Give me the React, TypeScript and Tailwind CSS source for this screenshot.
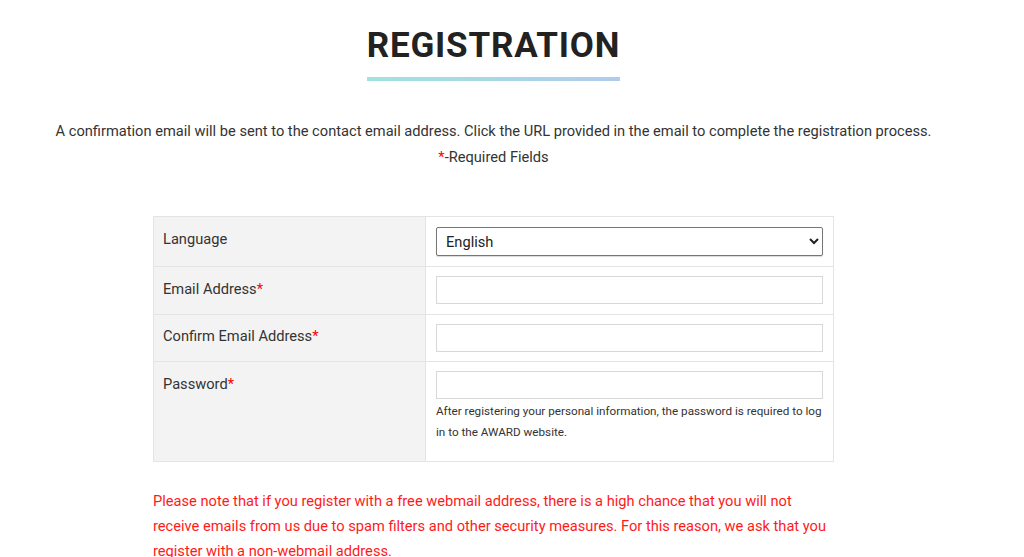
import React from "react";

export default function App() {
  const star = <span className="text-[#ff0000]">*</span>;
  return (
    <div className="w-[1024px] h-[557px] overflow-hidden bg-white text-[#333] font-['Roboto',sans-serif]">
      <div className="w-[987px] flex flex-col items-center">
        <h1 className="mt-[26px] text-[35px] leading-[40px] font-bold tracking-[0.8px] text-[#222]">REGISTRATION</h1>
        <div className="mt-[11px] w-[253px] h-[4px] bg-gradient-to-r from-[#9fe3de] to-[#b1cbee]" />
        <p className="mt-[37px] text-[14.65px] leading-[26px] text-center">
          A confirmation email will be sent to the contact email address. Click the URL provided in the email to complete the registration process.
        </p>
        <p className="text-[14.65px] leading-[26px] text-center">{star}-Required Fields</p>
        <table className="mt-[46px] w-[681px] border-collapse text-[14.65px] leading-[20px]">
          <tbody>
            <tr className="h-[50px]">
              <th className="w-[272px] bg-[#f3f3f3] border border-[#e4e4e4] px-[9px] pt-[12px] align-top text-left font-normal">Language</th>
              <td className="border border-[#e4e4e4] px-[10px] pt-[10px] align-top">
                <select className="w-full h-[29px] border border-[#767676] rounded-[2px] px-[5px] text-[14.65px] text-[#222] bg-white shadow-[0_1px_1px_rgba(0,0,0,0.15)]" defaultValue="English">
                  <option>English</option>
                </select>
              </td>
            </tr>
            <tr className="h-[48px]">
              <th className="bg-[#f3f3f3] border border-[#e4e4e4] px-[9px] pt-[12px] align-top text-left font-normal">Email Address{star}</th>
              <td className="border border-[#e4e4e4] px-[10px] pt-[9px] align-top">
                <input className="block w-full h-[28px] border border-[#d8d8d8] bg-white" />
              </td>
            </tr>
            <tr className="h-[47px]">
              <th className="bg-[#f3f3f3] border border-[#e4e4e4] px-[9px] pt-[11px] align-top text-left font-normal">Confirm Email Address{star}</th>
              <td className="border border-[#e4e4e4] px-[10px] pt-[9px] align-top">
                <input className="block w-full h-[28px] border border-[#d8d8d8] bg-white" />
              </td>
            </tr>
            <tr className="h-[100px]">
              <th className="bg-[#f3f3f3] border border-[#e4e4e4] px-[9px] pt-[12px] align-top text-left font-normal">Password{star}</th>
              <td className="border border-[#e4e4e4] px-[10px] pt-[9px] align-top">
                <input type="password" className="block w-full h-[28px] border border-[#d8d8d8] bg-white" />
                <p className="mt-[2px] text-[11.7px] leading-[21px] text-[#333]">
                  After registering your personal information, the password is required to log in to the AWARD website.
                </p>
              </td>
            </tr>
          </tbody>
        </table>
        <p className="mt-[27px] w-[681px] text-[14.65px] leading-[25px] text-[#ff1a1a]">
          Please note that if you register with a free webmail address, there is a high chance that you will not receive emails from us due to spam filters and other security measures. For this reason, we ask that you register with a non-webmail address.
        </p>
      </div>
    </div>
  );
}
